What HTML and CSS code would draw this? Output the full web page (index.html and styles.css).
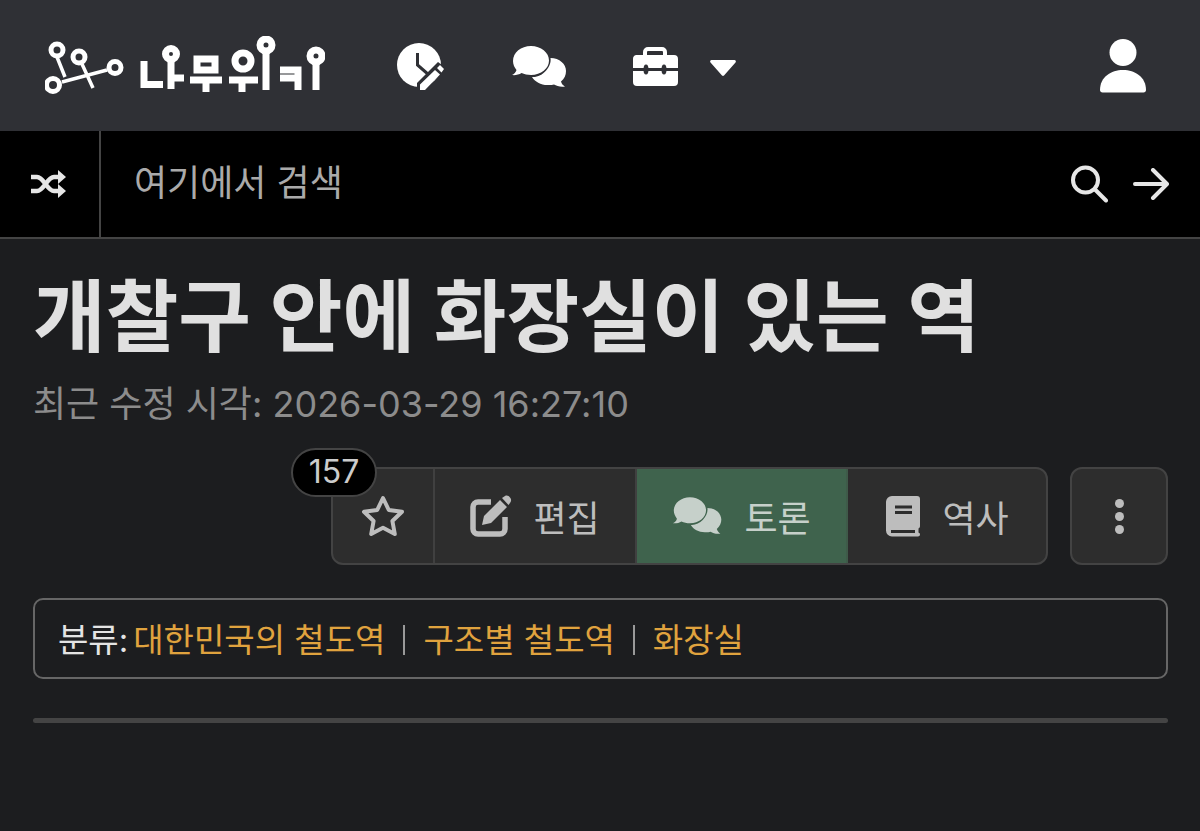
FILE: index.html
```html
<!DOCTYPE html>
<html lang="ko">
<head>
<meta charset="utf-8">
<title>개찰구 안에 화장실이 있는 역</title>
<link rel="stylesheet" href="styles.css">
</head>
<body>
<header class="topbar">
  <svg class="logo" width="280" height="60" viewBox="45 34 280 60" aria-label="나무위키">
    <g class="logo-lines">
      <path d="M57 55 65 75M82 62 93 86M62 80 107 68"/>
      <circle cx="57" cy="48" r="6"/><circle cx="79" cy="55" r="6"/><circle cx="115" cy="65.500" r="6"/><circle cx="53" cy="83" r="6.500"/>
    </g>
    <g class="logo-word">
      <path d="M144 59V82.500H163M171 52V87M171 76H184"/>
      <path d="M197 57H215V68H197ZM190 78H222M206 78V90"/>
      <circle class="ring" cx="243" cy="59" r="8"/>
      <path d="M229 78H258M242 78V90M266 43V88M280 68H298V88M280 76H297M316 54V88"/>
      <circle class="ring" cx="171" cy="52" r="5.500"/>
      <circle class="ring" cx="266" cy="43" r="6"/>
      <circle class="ring" cx="316" cy="54" r="6"/>
    </g>
  </svg>
  <nav class="topnav">
    <svg class="nav-clock" width="50" height="50" viewBox="0 0 50 50"><circle cx="22" cy="22" r="22" fill="#fff"/><path d="M20.500 10V22L32 32" fill="none" stroke="#2f3035" stroke-width="3"/><path d="M20 47 20 40 41 19 49 25 27 48Z" fill="#2f3035"/><path d="M23 47V41.500L38 27 43 31.500 28 47ZM40 25 43 22 47 26 44.500 29.500Z" fill="#fff"/></svg>
    <svg class="nav-chat" width="58" height="46" viewBox="0 0 58 46"><path d="M20 2C10 2 2 8.500 2 17c0 3.500 1.500 6.500 3.500 9C5 28 3 30.500 1 31c3 .5 7-.3 9.500-2 2.800 1.200 6 2 9.500 2 10 0 18-6.500 18-14.500S30 2 20 2Z" fill="#fff"/><path d="M39.500 14C41 23 31 34 21 33c3 5 9.500 8.500 17 8 2 0 3.500 0 5-.5 2.500 1.500 7 3 11 2-2-1-3.500-3-4-5 3.500-3 5-6.500 5-10.500 0-7-6.500-13-15.500-13Z" fill="#fff"/></svg>
    <svg class="nav-tool" width="46" height="40" viewBox="0 0 46 40"><path d="M13 10V5a3 3 0 0 1 3-3h14a3 3 0 0 1 3 3v5" fill="none" stroke="#fff" stroke-width="4"/><path d="M4 8H42a4 4 0 0 1 4 4V21H1V12A4 4 0 0 1 4 8ZM1 24H46V35a4 4 0 0 1-4 4H5a4 4 0 0 1-4-4Z" fill="#fff"/><ellipse cx="14" cy="22.500" rx="2.500" ry="5" fill="#2f3035"/><ellipse cx="32" cy="22.500" rx="2.500" ry="5" fill="#2f3035"/></svg>
    <svg class="nav-caret" width="28" height="18" viewBox="0 0 28 18"><path d="M2.500 1H25.500a1.500 1.500 0 0 1 1 2.500L15 16.500a1.500 1.500 0 0 1-2 0L1.500 3.500A1.500 1.500 0 0 1 2.500 1Z" fill="#fff"/></svg>
  </nav>
  <svg class="user" width="46" height="54" viewBox="0 0 46 54"><circle cx="23" cy="13.500" r="13.500" fill="#fff"/><path d="M23 31C11 31 0 38 0 51c0 1.500 1 2.500 2.500 2.500H43.500c1.500 0 2.500-1 2.500-2.500C46 38 35 31 23 31Z" fill="#fff"/></svg>
</header>

<div class="searchbar">
  <div class="shuffle">
    <svg width="38" height="32" viewBox="0 0 38 32" fill="none" stroke="#e6e6e6" stroke-width="4.500"><path d="M1 9H7C14 9 17 23 24 23H29M1 23H7C14 23 17 9 24 9H29"/><path d="M28 2 36 9 28 16ZM28 16 36 23 28 30Z" fill="#e6e6e6" stroke="none"/></svg>
  </div>
  <div class="search-input">여기에서 검색</div>
  <div class="search-actions">
    <svg width="38" height="38" viewBox="0 0 38 38" fill="none" stroke="#e6e6e6" stroke-width="4" stroke-linecap="round"><circle cx="15.500" cy="15" r="12.500"/><path d="M25 24.500 36 35.500"/></svg>
    <svg width="36" height="32" viewBox="0 0 36 32" fill="none" stroke="#e6e6e6" stroke-width="4" stroke-linecap="round" stroke-linejoin="round"><path d="M2 16H33M20 2 34 16 20 30"/></svg>
  </div>
</div>

<main class="content">
  <h1 class="title">개찰구 안에 화장실이 있는 역</h1>
  <p class="modified">최근 수정 시각: 2026-03-29 16:27:10</p>

  <div class="toolbar">
    <div class="btn-group">
      <span class="badge">157</span>
      <a class="btn btn-star"><svg width="44" height="42" viewBox="0 0 44 42" fill="none" stroke="#bdbdbd" stroke-width="4" stroke-linejoin="round"><path d="M22 3 27.800 15 41 16.800 31.400 26 33.800 39 22 32.800 10.200 39 12.600 26 3 16.800 16.200 15Z"/></svg></a>
      <a class="btn btn-edit"><svg width="42" height="42" viewBox="0 0 42 42"><path d="M21 7H8a5 5 0 0 0-5 5V34a5 5 0 0 0 5 5H30a5 5 0 0 0 5-5V22" fill="none" stroke="#bdbdbd" stroke-width="5.500"/><path d="M12 30 14 21 30 5 37 12 21 28ZM32 3 35 1C37 0 39 1 40 2.500 41.500 4 41.500 6 40 8L38.500 10Z" fill="#bdbdbd"/></svg>편집</a>
      <a class="btn btn-talk"><svg width="52" height="42" viewBox="0 0 58 46"><path d="M20 2C10 2 2 8.500 2 17c0 3.500 1.500 6.500 3.500 9C5 28 3 30.500 1 31c3 .5 7-.3 9.500-2 2.800 1.200 6 2 9.500 2 10 0 18-6.500 18-14.500S30 2 20 2Z" fill="#c6d0ca"/><path d="M39.500 14C41 23 31 34 21 33c3 5 9.500 8.500 17 8 2 0 3.500 0 5-.5 2.500 1.500 7 3 11 2-2-1-3.500-3-4-5 3.500-3 5-6.500 5-10.500 0-7-6.500-13-15.500-13Z" fill="#c6d0ca"/></svg>토론</a>
      <a class="btn btn-hist"><svg width="36" height="42" viewBox="0 0 36 42"><path d="M7 1H32a3 3 0 0 1 3 3V31c0 1-.5 2-1.500 2.500V37.500c1 .5 1.500 1 1.500 2s-1 2-2 2H7a6 6 0 0 1-6-6V7A6 6 0 0 1 7 1Z" fill="#bdbdbd"/><path d="M10 12H27M10 17.500H27M6 36.500H30" stroke="#2d2d2d" stroke-width="3"/></svg>역사</a>
    </div>
    <a class="more"><span></span><span></span><span></span></a>
  </div>

  <div class="category">
    <span class="cat-label">분류:</span>
    <a class="cat-link">대한민국의 철도역</a><i class="cat-sep"></i><a class="cat-link">구조별 철도역</a><i class="cat-sep"></i><a class="cat-link">화장실</a>
  </div>
  <hr class="rule">
</main>
</body>
</html>
```
FILE: styles.css
```css
* { box-sizing: border-box; }
html, body { margin: 0; padding: 0; }
body {
  width: 1200px;
  height: 831px;
  overflow: hidden;
  background: #1c1d1f;
  font-family: Inter, "Noto Sans CJK KR", sans-serif;
  color: #e0e0e0;
}
.topbar {
  height: 131px;
  background: #2f3035;
  display: flex;
  align-items: center;
  padding: 0 54px 0 45px;
}
.logo { display: block; margin-top: 0; }
.logo-lines { fill: none; stroke: #fff; }
.logo-lines path { stroke-width: 3.500; }
.logo-lines circle { stroke-width: 5; }
.logo-word { fill: none; stroke: #fff; stroke-width: 7; }
.logo-word .ring { fill: #2f3035; stroke-width: 7; }
.topnav {
  display: flex;
  align-items: center;
  margin-left: 72px;
  flex: 1;
}
.nav-clock { margin-top: 5px; }
.nav-chat { margin-left: 64px; margin-top: 3px; }
.nav-tool { margin-left: 63px; margin-top: 3px; }
.nav-caret { margin-left: 31px; margin-top: 5px; }
.user { margin-top: 0; }
.searchbar {
  height: 108px;
  background: #000;
  border-bottom: 2px solid #444;
  display: flex;
  align-items: stretch;
}
.shuffle {
  width: 101px;
  border-right: 2px solid #444;
  display: flex;
  align-items: center;
  padding-left: 30px;
}
.search-input {
  flex: 1;
  padding-left: 33px;
  font-size: 36px;
  line-height: 104px;
  color: #aaa;
}
.search-actions {
  display: flex;
  align-items: center;
  gap: 25px;
  padding-right: 31px;
}
.content { padding: 0 32px 0 33px; }
.title {
  margin: 21px 0 0;
  font-size: 79px;
  line-height: 114px;
  font-weight: 700;
  color: #e0e0e0;
  white-space: nowrap;
}
.modified {
  margin: 4px 0 0;
  font-size: 36px;
  line-height: 52px;
  color: #8c8c8c;
}
.toolbar {
  display: flex;
  justify-content: flex-end;
  gap: 22px;
  margin-top: 37px;
}
.btn-group {
  position: relative;
  display: flex;
  height: 98px;
  background: #2d2d2d;
  border: 2px solid #434343;
  border-radius: 12px;
}
.badge {
  position: absolute;
  left: -42px;
  top: -21px;
  width: 86px;
  height: 49px;
  background: #000;
  border: 2px solid #444;
  border-radius: 25px;
  color: #ccc;
  font-size: 32px;
  line-height: 44px;
  text-align: center;
}
.btn {
  display: flex;
  align-items: center;
  justify-content: center;
  gap: 21px;
  font-size: 36px;
  color: #bdbdbd;
  border-right: 2px solid #404040;
}
.btn-star { width: 102px; }
.btn-edit { width: 202px; }
.btn-talk { width: 211px; background: #3f634d; color: #c6d0ca; border-right-color: #3f5a49; gap: 20px; }
.btn-hist { flex: 1; width: 198px; border-right: 0; }
.more {
  width: 98px;
  height: 98px;
  background: #2d2d2d;
  border: 2px solid #434343;
  border-radius: 12px;
  display: flex;
  flex-direction: column;
  align-items: center;
  justify-content: center;
  gap: 4px;
}
.more span { width: 9px; height: 9px; border-radius: 50%; background: #bdbdbd; }
.category {
  display: flex;
  align-items: center;
  margin-top: 33px;
  height: 81px;
  border: 2px solid #666;
  border-radius: 10px;
  padding: 0 0 2px 23px;
  font-size: 33px;
  white-space: nowrap;
}
.cat-label { color: #e4e4e4; margin-right: 5px; }
.cat-link { color: #e0a33e; }
.cat-sep { width: 2px; height: 30px; background: #999; margin: 4px 18px 0; }
.rule {
  margin: 39px 0 0;
  height: 5px;
  border: 0;
  border-radius: 3px;
  background: #444;
}
```
